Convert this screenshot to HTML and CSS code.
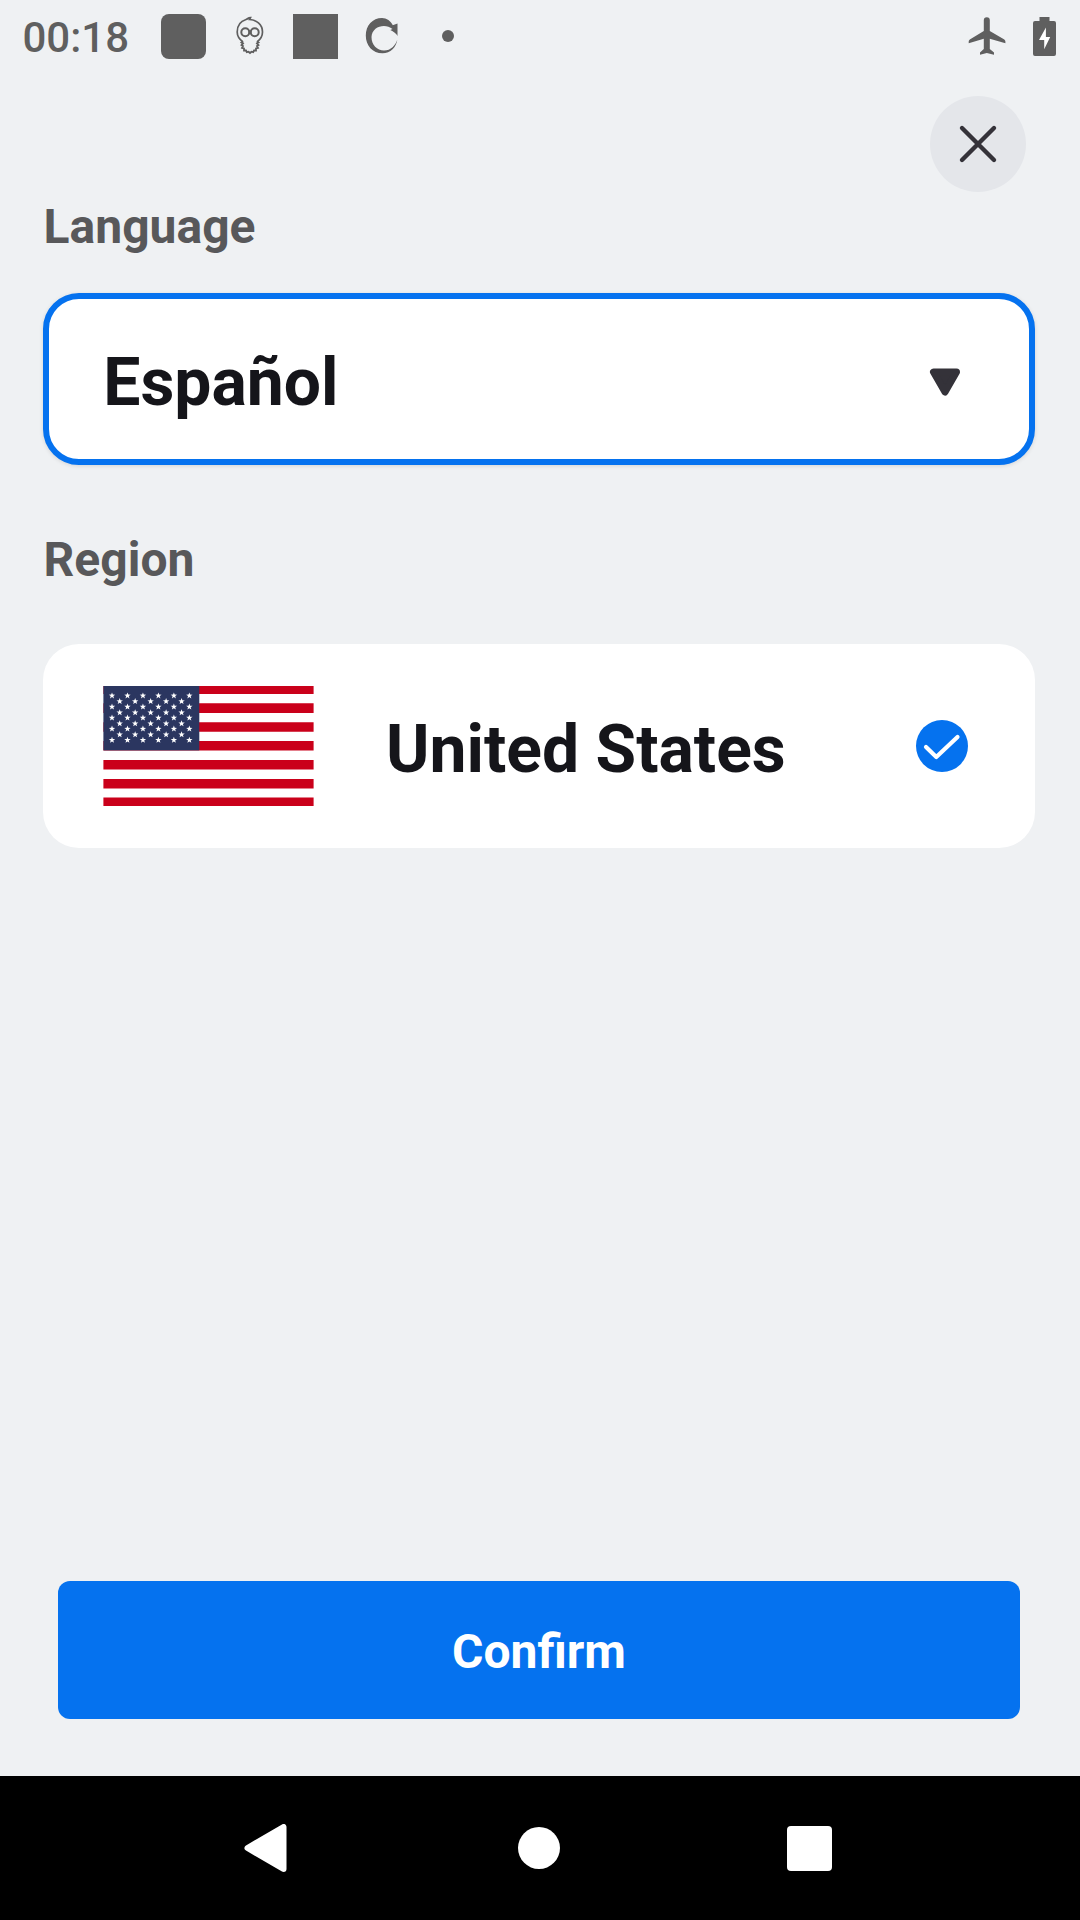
FILE: index.html
```html
<!DOCTYPE html>
<html lang="en">
<head>
<meta charset="utf-8">
<title>Language and region</title>
<link rel="stylesheet" href="styles.css">
</head>
<body>
<div class="screen">
  <header class="status">
    <span class="clock">00:18</span>
    <span class="tile tile-round"></span>
    <svg class="icon-face" width="28" height="40" viewBox="0 0 28 40" fill="none" stroke="currentColor" stroke-width="1.700">
      <path d="M7 26C3 23 1.200 20 1.200 16 1.200 9 5 5 10 3.500 12 3 12 1.500 14.500 1.500L13.500 3.500C20 4 26.500 8 26.500 16 26.500 20 25 23 21 26"/>
      <circle cx="9.300" cy="16.300" r="4" stroke-width="2"/><circle cx="18.700" cy="16.300" r="4" stroke-width="2"/>
      <path stroke-width="3" d="M12.500 16.300H15.500"/>
      <path stroke-width="1.800" d="M7 25.500l-1.500 1 1.500 1-1.500 1.500 1.500 1-1 2 2 .5 0 2 2 0 .8 1.700 1.700-.5 1.500 1.300 1.500-1.300 1.700 .5 .8-1.700 2 0 0-2 2-.5-1-2 1.500-1-1.500-1.500 1.500-1-1.500-1"/>
    </svg>
    <span class="tile tile-square"></span>
    <svg class="icon-swirl" width="34" height="38" viewBox="0 0 34 38" fill="currentColor">
      <path d="M27 8.500 32.500 6.500V19C31.500 16.500 28.500 14.500 25.300 13L27.500 12C20 6 7 9.500 6.500 20C6.500 28 12 33.500 19 33.500C26 33.500 30.500 28.500 32.300 22.500C31.500 30 25.500 36.300 17.500 36.300C7.500 36.300 .8 28.500 .8 18.500C.8 8.500 7.500 1 17 1C21.500 1 26 4 28 8.500Z"/>
    </svg>
    <span class="dot"></span>
    <svg class="icon-plane" width="38" height="38" viewBox="0 0 38 38" fill="currentColor">
      <path d="M15.800 3.200a3 3 0 0 1 6 0V14L36.300 22.400Q37.400 23.200 37.400 24.500V26.200L21.800 21.800V32L26 35.500V37.700L18.800 36 12 37.700V35.500L15.800 32V21.800L.7 26.200V24.500Q.7 23.200 1.800 22.400L15.800 14Z"/>
    </svg>
    <svg class="icon-battery" width="23" height="39" viewBox="0 0 23 39">
      <path fill="currentColor" d="M6.500 0h10v4H21a2 2 0 0 1 2 2V37a2 2 0 0 1-2 2H2a2 2 0 0 1-2-2V6a2 2 0 0 1 2-2H6.500Z"/>
      <path class="bolt" d="M12.900 10.500V20H17.200L11.200 32.300V23H6Z"/>
    </svg>
  </header>

  <main class="content">
    <button class="close" aria-label="Close">
      <svg width="40" height="40" viewBox="0 0 40 40" fill="none" stroke="currentColor" stroke-width="4.400" stroke-linecap="round"><path d="M4 4 36 36M36 4 4 36"/></svg>
    </button>

    <h2 class="label">Language</h2>
    <div class="card select">
      <span class="value">Español</span>
      <svg class="caret" width="31" height="28" viewBox="0 0 31 28"><path d="M4.500 4H27.500L16 24Z" fill="currentColor" stroke="currentColor" stroke-width="7" stroke-linejoin="round"/></svg>
    </div>

    <h2 class="label label-region">Region</h2>
    <div class="card region">
      <svg class="flag" width="211" height="120" viewBox="0 0 211 120">
        <defs>
          <path id="star" fill="#fff" d="M0-3.300.8-1.100 3.200-1 1.300.4 2 2.700 0 1.400-2 2.700-1.300.4-3.200-1-.8-1.100Z"/>
          <g id="row5"><use href="#star"/><use href="#star" x="15.470"/><use href="#star" x="30.940"/><use href="#star" x="46.410"/><use href="#star" x="61.880"/></g>
          <g id="row6"><use href="#row5"/><use href="#star" x="77.350"/></g>
        </defs>
        <path fill="#ca001a" d="M.4-1.600H210.600V8H.4ZM.4 17.300H210.600V26.900H.4ZM.4 36.200H210.600V45.800H.4ZM.4 55.100H210.600V64.400H.4ZM.4 74H210.600V83.600H.4ZM.4 92.900H210.600V102.500H.4ZM.4 111.500H210.600V121H.4Z"/>
        <rect x=".4" width="95.900" height="64.400" fill="#2b3660"/>
        <use href="#row6" x="9" y="9.700"/><use href="#row5" x="16.700" y="15.400"/>
        <use href="#row6" x="9" y="20.800"/><use href="#row5" x="16.700" y="26.500"/>
        <use href="#row6" x="9" y="31.800"/><use href="#row5" x="16.700" y="37.500"/>
        <use href="#row6" x="9" y="42.900"/><use href="#row5" x="16.700" y="48.500"/>
        <use href="#row6" x="9" y="54"/>
      </svg>
      <span class="value">United States</span>
      <svg class="check" width="52" height="52" viewBox="0 0 52 52"><circle cx="26" cy="26" r="26" fill="#0572ef"/><path d="M10 27 20.300 37 41.500 17" fill="none" stroke="#fff" stroke-width="4.200" stroke-linecap="round" stroke-linejoin="round"/></svg>
    </div>

    <button class="confirm">Confirm</button>
  </main>

  <nav class="navbar">
    <svg width="43" height="49" viewBox="0 0 43 49"><path d="M3.500 24 39.500 3V45Z" fill="#fff" stroke="#fff" stroke-width="6" stroke-linejoin="round"/></svg>
    <span class="home"></span>
    <span class="recent"></span>
  </nav>
</div>
</body>
</html>
```
FILE: styles.css
```css
* { box-sizing: border-box; }

body {
  margin: 0;
  font-family: Roboto, "Liberation Sans", sans-serif;
  background: #eff1f3;
}

svg { display: block; flex: none; }

button {
  border: 0;
  font-family: inherit;
}

.screen {
  display: flex;
  flex-direction: column;
  width: 1080px;
  height: 1920px;
}

/* Status bar */
.status {
  display: flex;
  align-items: center;
  height: 72px;
  padding: 0 24px 0 22.5px;
  color: #5f5f5f;
}

.clock {
  width: 138px;
  padding-top: 3px;
  font-size: 42px;
  font-weight: 500;
}

.tile {
  width: 45px;
  height: 45px;
  background: currentColor;
}

.tile-round { border-radius: 8px; }
.tile-square { margin-left: 29.5px; }
.icon-face { margin-left: 30px; }
.icon-swirl { margin-left: 27px; }

.dot {
  width: 12px;
  height: 12px;
  margin-left: 43px;
  border-radius: 50%;
  background: currentColor;
}

.icon-plane { margin-left: auto; }
.icon-battery { margin-left: 27px; }
.bolt { fill: #fff; }

/* Main area */
.content {
  display: flex;
  flex: 1;
  flex-direction: column;
  padding: 24px 45px 57px 43px;
}

.close {
  display: grid;
  place-items: center;
  align-self: flex-end;
  width: 96px;
  height: 96px;
  margin-right: 9px;
  padding: 0;
  border-radius: 50%;
  color: #343239;
  background: #e4e6ea;
}

.label {
  margin: 7px 0 0;
  padding-left: .6px;
  font-size: 48px;
  font-weight: 700;
  line-height: 56px;
  color: #58585a;
}

.label-region { margin-top: 67px; }

.card {
  display: flex;
  align-items: center;
  border-radius: 36px;
  background: #fff;
}

.select {
  height: 172px;
  margin-top: 38px;
  padding: 0 69px 0 54.3px;
  border: 6px solid #0572ef;
  box-shadow: 0 1px 4px rgba(0, 0, 0, .12);
}

.region {
  height: 204px;
  margin-top: 56px;
  padding: 0 67px 0 60px;
}

.value {
  padding-top: 8px;
  font-size: 66px;
  font-weight: 700;
  line-height: 78px;
  color: #15151a;
}

.caret {
  margin: 6px 0 0 auto;
  color: #343239;
}

.flag { margin-right: 72px; }
.check { margin-left: auto; }

.confirm {
  height: 138px;
  margin: auto 15px 0;
  padding: 3px 0 0;
  border-radius: 12px;
  font-size: 48px;
  font-weight: 700;
  color: #fff;
  background: #0572ef;
}

/* System navigation */
.navbar {
  display: flex;
  align-items: center;
  height: 144px;
  padding-left: 244px;
  background: #000;
}

.home {
  width: 42px;
  height: 42px;
  margin-left: 231px;
  border-radius: 50%;
  background: #fff;
}

.recent {
  width: 45px;
  height: 45px;
  margin-left: 227px;
  border-radius: 4px;
  background: #fff;
}
```
